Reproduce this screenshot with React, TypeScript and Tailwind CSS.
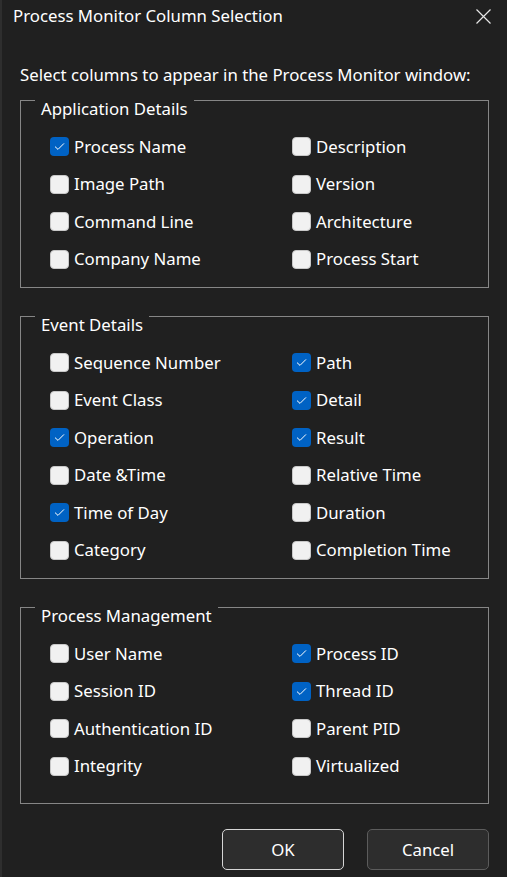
import React from 'react';

type Item = { label: string; checked?: boolean };

const groups: { title: string; left: Item[]; right: Item[]; pb: string }[] = [
  {
    title: 'Application Details',
    left: [{ label: 'Process Name', checked: true }, { label: 'Image Path' }, { label: 'Command Line' }, { label: 'Company Name' }],
    right: [{ label: 'Description' }, { label: 'Version' }, { label: 'Architecture' }, { label: 'Process Start' }],
    pb: 'pb-[9px]',
  },
  {
    title: 'Event Details',
    left: [
      { label: 'Sequence Number' },
      { label: 'Event Class' },
      { label: 'Operation', checked: true },
      { label: 'Date &Time' },
      { label: 'Time of Day', checked: true },
      { label: 'Category' },
    ],
    right: [
      { label: 'Path', checked: true },
      { label: 'Detail', checked: true },
      { label: 'Result', checked: true },
      { label: 'Relative Time' },
      { label: 'Duration' },
      { label: 'Completion Time' },
    ],
    pb: 'pb-[9px]',
  },
  {
    title: 'Process Management',
    left: [{ label: 'User Name' }, { label: 'Session ID' }, { label: 'Authentication ID' }, { label: 'Integrity' }],
    right: [{ label: 'Process ID', checked: true }, { label: 'Thread ID', checked: true }, { label: 'Parent PID' }, { label: 'Virtualized' }],
    pb: 'pb-[18px]',
  },
];

const Check: React.FC<Item> = ({ label, checked }) => (
  <div className="h-[37.5px] flex items-center gap-[5px]">
    {checked ? (
      <span className="w-[19px] h-[19px] rounded-[4px] bg-[#0062c4] flex items-center justify-center">
        <svg width="11" height="9" viewBox="0 0 11 9" fill="none">
          <path d="M1 4.6 L4 7.4 L10 1.4" stroke="#ffffff" strokeWidth="1" />
        </svg>
      </span>
    ) : (
      <span className="w-[19px] h-[19px] rounded-[4px] bg-[#f1f1f1] border border-[#c8c8c8]" />
    )}
    <span>{label}</span>
  </div>
);

export default function App() {
  return (
    <div
      className="w-[507px] h-[877px] bg-[#202020] text-white text-[16.8px] leading-[20px] flex border-l-2 border-[#2e2e2e] overflow-hidden"
      style={{ fontFamily: '"Noto Sans", "Open Sans", sans-serif' }}
    >
      <div className="flex-1 flex flex-col">
        {/* title bar */}
        <div className="h-[32px] flex items-center justify-between pl-[11px] pr-[16px]">
          <span>Process Monitor Column Selection</span>
          <svg width="15" height="15" viewBox="0 0 15 15" fill="none">
            <path d="M0.5 0.5 L14.5 14.5 M14.5 0.5 L0.5 14.5" stroke="#e6e6e6" strokeWidth="1.2" />
          </svg>
        </div>

        <div className="px-[18px] pt-[33px]">
          <p className="mb-[15px]">Select columns to appear in the Process Monitor window:</p>

          <div className="w-[469px] flex flex-col gap-[28px]">
            {groups.map((g) => (
              <div key={g.title} className={`border border-[#868686] ${g.pb}`}>
                <div className="-mt-[2px] h-[20px] ml-[14px] px-[6px] w-fit bg-[#202020]">{g.title}</div>
                <div className="mt-[9px] pl-[29px] grid grid-cols-[242px_1fr]">
                  <div className="flex flex-col">
                    {g.left.map((it) => (
                      <Check key={it.label} {...it} />
                    ))}
                  </div>
                  <div className="flex flex-col">
                    {g.right.map((it) => (
                      <Check key={it.label} {...it} />
                    ))}
                  </div>
                </div>
              </div>
            ))}
          </div>

          <div className="w-[469px] flex justify-end gap-[23px] mt-[25px]">
            <button className="w-[122px] h-[41px] rounded-[5px] bg-[#2d2d2d] border border-[#d6d6d6]">OK</button>
            <button className="w-[122px] h-[41px] rounded-[5px] bg-[#2d2d2d] border border-[#5c5c5c]">Cancel</button>
          </div>
        </div>
      </div>
    </div>
  );
}
